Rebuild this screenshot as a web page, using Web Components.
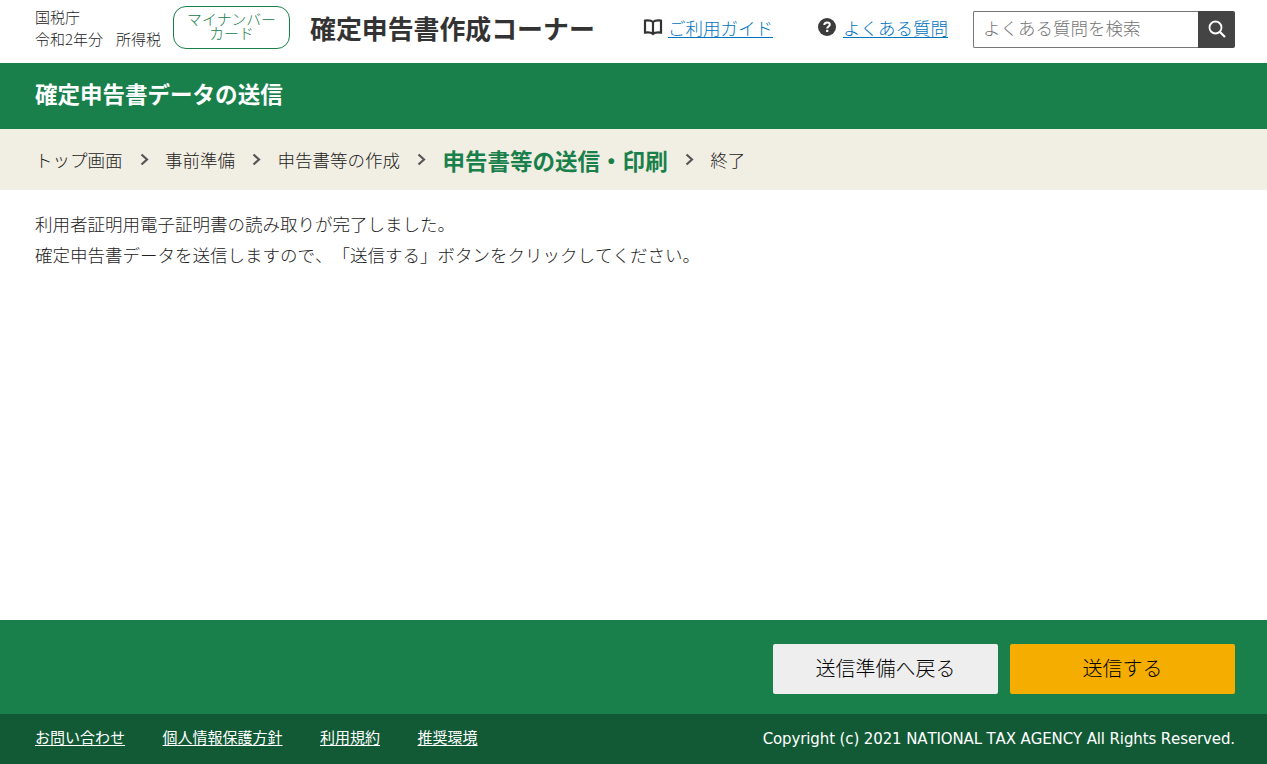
<!DOCTYPE html>
<html lang="ja"><head><meta charset="utf-8"><title>確定申告書データの送信</title>
<style>
html,body{margin:0;padding:0;height:100%;background:#fff}
body{font-family:"Noto Sans CJK JP","Noto Sans",sans-serif;color:#222;overflow:hidden;text-spacing-trim:space-all;font-kerning:none;font-weight:300}
app-page{height:764px}
</style></head><body>
<template id="t-page"><style>
:host{display:flex;flex-direction:column;height:100%}
::slotted(main-content){flex:1}
</style><slot></slot></template>

<template id="t-header"><style>
:host{display:flex;align-items:center;height:63px;padding:0 32px 0 35px;box-sizing:border-box;background:#fff}
.org{font-size:15px;line-height:22px;color:#222;width:127px;white-space:nowrap;margin-top:-8px}
.org span{margin-left:13px}
.card{box-sizing:border-box;width:117px;height:43px;margin:-8px 0 0 11px;border:1px solid #19804c;border-radius:13px;color:#147a46;font-size:14.800px;line-height:14px;display:flex;align-items:center;justify-content:center;text-align:center}
.card span{margin-top:-3px}
h1{font-size:25.900px;font-weight:700;color:#333;margin:-7px 0 0 20px;width:333px;white-space:nowrap;line-height:36px}
a{color:#0073c0;font-size:17.500px;text-decoration:underline;text-underline-offset:2px;white-space:nowrap}
.link{display:flex;align-items:center;margin-top:-9px}
.guide{width:175px;gap:5px}
.faq{width:155px;gap:7px}
.search{display:flex;margin-top:-5px}
.box{box-sizing:border-box;width:225px;height:37px;border:1px solid #777;border-right:0;border-radius:2px 0 0 2px;padding:0 9px;font-size:17.500px;line-height:31px;color:#757575;white-space:nowrap}
.btn{width:37px;height:37px;background:#444;border-radius:0 2px 2px 0;display:flex;align-items:center;justify-content:center}
</style>
<div class="org">国税庁<br>令和2年分<span>所得税</span></div>
<div class="card"><span>マイナンバー<br>カード</span></div>
<h1>確定申告書作成コーナー</h1>
<div class="link guide"><svg width="20" height="18" viewBox="0 0 20 18"><path d="M10 4C8.500 2.600 5 2.200 2 2.600V14.600C5 14.200 8.500 14.600 10 16C11.500 14.600 15 14.200 18 14.600V2.600C15 2.200 11.500 2.600 10 4ZM10 4V16" fill="none" stroke="#333" stroke-width="2.200"/></svg><a href="#">ご利用ガイド</a></div>
<div class="link faq"><svg width="18" height="18" viewBox="0 0 18 18"><circle cx="9" cy="9" r="9" fill="#3c3c3c"/><path d="M6.300 7C6.300 5.300 7.600 4.400 9.100 4.400C10.700 4.400 11.800 5.300 11.800 6.600C11.800 8.500 9.200 8.500 9.200 10.500" fill="none" stroke="#fff" stroke-width="2"/><rect x="8.100" y="11.800" width="2.200" height="2.200" fill="#fff"/></svg><a href="#">よくある質問</a></div>
<div class="search"><div class="box">よくある質問を検索</div><div class="btn"><svg width="20" height="20" viewBox="0 0 20 20"><circle cx="8.500" cy="8.500" r="6" fill="none" stroke="#fff" stroke-width="1.800"/><path d="M13 13L18 18" stroke="#fff" stroke-width="2.200"/></svg></div></div>
</template>

<template id="t-band"><style>
:host{display:flex;align-items:center;height:66px;padding:0 35px;box-sizing:border-box;background:#19804c;color:#fff}
h2{margin:-6px 0 0;font-size:22.530px;font-weight:700;line-height:32px;white-space:nowrap}
</style><h2><slot></slot></h2></template>

<template id="t-steps"><style>
:host{display:flex;align-items:center;height:61px;padding:0 35px;box-sizing:border-box;background:#f1eee3;font-size:17.500px;color:#222;white-space:nowrap}
</style><slot></slot></template>

<template id="t-step"><style>
:host{display:inline-flex;align-items:center}
:host([current]) span{font-size:22.530px;font-weight:700;color:#19804c}
svg{margin:0 16.500px 0 17px;display:block}
:host([last]) svg{display:none}
</style><span><slot></slot></span><svg width="9" height="13" viewBox="0 0 9 13"><path d="M1.500 1.500L7 6.500L1.500 11.500" fill="none" stroke="#555" stroke-width="2.200"/></svg></template>

<template id="t-main"><style>
:host{display:block;padding:18px 35px 0;font-size:17.500px;line-height:31px;color:#222;white-space:nowrap}
</style><slot></slot></template>

<template id="t-actions"><style>
:host{display:flex;justify-content:flex-end;gap:12px;height:94px;padding:24px 32px 0 0;box-sizing:border-box;background:#19804c}
</style><slot></slot></template>

<template id="t-btn"><style>
:host{display:flex;align-items:center;justify-content:center;box-sizing:border-box;width:225px;height:50px;padding-bottom:4px;border-radius:2px;background:#eee;color:#000;font-size:20px}
:host([primary]){background:#f5ae00}
</style><slot></slot></template>

<template id="t-footer"><style>
:host{display:flex;align-items:center;height:50px;padding:0 32px 0 35px;box-sizing:border-box;background:#125a36;color:#fff;font-size:15px;font-weight:400;white-space:nowrap}
nav{display:flex;gap:37.500px;flex:1;margin-top:-6px}
a{color:#fff;text-decoration:underline;text-underline-offset:2px}
.c{font-family:"DejaVu Sans",sans-serif;font-size:15px;font-weight:400;letter-spacing:-.12px}
</style><nav><a href="#">お問い合わせ</a><a href="#">個人情報保護方針</a><a href="#">利用規約</a><a href="#">推奨環境</a></nav><div class="c">Copyright (c) 2021 NATIONAL TAX AGENCY All Rights Reserved.</div></template>

<app-page>
<site-header></site-header>
<title-band>確定申告書データの送信</title-band>
<step-bar><step-item>トップ画面</step-item><step-item>事前準備</step-item><step-item>申告書等の作成</step-item><step-item current>申告書等の送信・印刷</step-item><step-item last>終了</step-item></step-bar>
<main-content>利用者証明用電子証明書の読み取りが完了しました。<br>確定申告書データを送信しますので、「送信する」ボタンをクリックしてください。</main-content>
<action-bar><action-button>送信準備へ戻る</action-button><action-button primary>送信する</action-button></action-bar>
<site-footer></site-footer>
</app-page>
<script>
const map={'app-page':'t-page','site-header':'t-header','title-band':'t-band','step-bar':'t-steps','step-item':'t-step','main-content':'t-main','action-bar':'t-actions','action-button':'t-btn','site-footer':'t-footer'};
for(const [n,t] of Object.entries(map)){
customElements.define(n,class extends HTMLElement{constructor(){super();this.attachShadow({mode:'open'}).append(document.getElementById(t).content.cloneNode(true));}});
}
</script>
</body></html>
